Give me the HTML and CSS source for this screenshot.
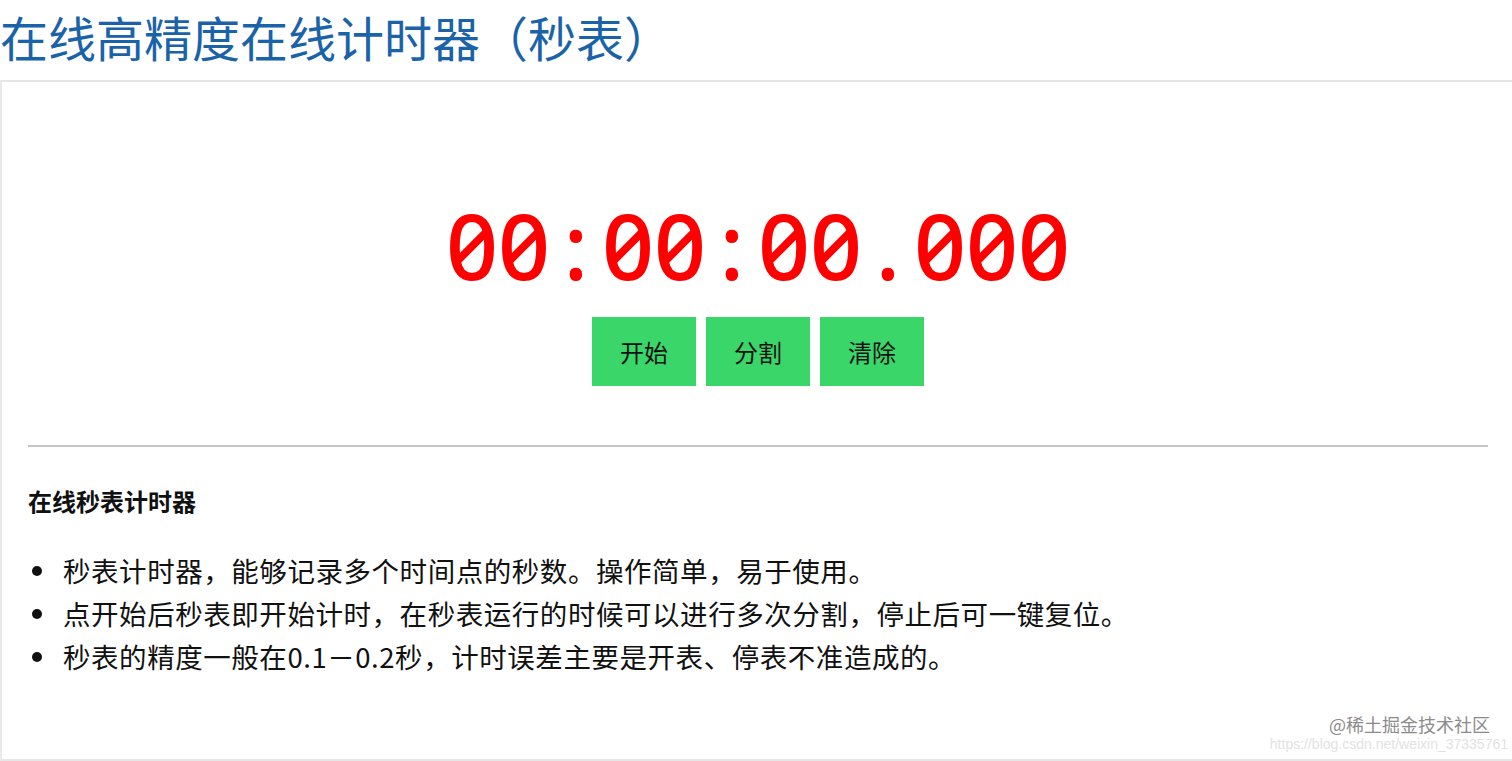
FILE: index.html
```html
<!DOCTYPE html>
<html lang="zh-CN">
<head>
<meta charset="utf-8">
<title>在线高精度在线计时器（秒表）</title>
<link rel="stylesheet" href="styles.css">
</head>
<body>
<h1 class="title">在线高精度在线计时器（秒表）</h1>
<div class="panel">
  <div class="timer" aria-label="00:00:00.000">
    <span class="ch">0</span><span class="ch">0</span><span class="ch">:</span><span class="ch">0</span><span class="ch">0</span><span class="ch">:</span><span class="ch">0</span><span class="ch">0</span><span class="ch">.</span><span class="ch">0</span><span class="ch">0</span><span class="ch">0</span>
  </div>
  <div class="buttons">
    <button class="btn">开始</button>
    <button class="btn">分割</button>
    <button class="btn">清除</button>
  </div>
  <hr class="rule">
  <h2 class="subtitle">在线秒表计时器</h2>
  <ul class="notes">
    <li>秒表计时器，能够记录多个时间点的秒数。操作简单，易于使用。</li>
    <li>点开始后秒表即开始计时，在秒表运行的时候可以进行多次分割，停止后可一键复位。</li>
    <li>秒表的精度一般在0.1－0.2秒，计时误差主要是开表、停表不准造成的。</li>
  </ul>
  <div class="watermark">
    <span class="wm-main">@稀土掘金技术社区</span>
    <span class="wm-url">https://blog.csdn.net/weixin_37335761</span>
  </div>
</div>
</body>
</html>
```

FILE: styles.css
```css
html, body {
  margin: 0;
  padding: 0;
  background: #ffffff;
}
body {
  font-family: "Noto Sans CJK SC", "Noto Sans", sans-serif;
  color: #111;
}
.title {
  margin: 0;
  height: 80px;
  line-height: 72px;
  font-size: 48px;
  font-weight: 400;
  color: #1b63a8;
  white-space: nowrap;
}
.panel {
  position: relative;
  box-sizing: border-box;
  height: 681px;
  border-top: 2px solid #e6e6e6;
  border-left: 2px solid #e9e9e9;
  border-bottom: 2px solid #e6e6e6;
  padding: 0 24px 0 26px;
}
.timer {
  margin-top: 113px;
  display: flex;
  justify-content: center;
  font-family: "Noto Sans", sans-serif;
  font-feature-settings: "zero" 1, "tnum" 1;
  font-weight: 500;
  font-size: 91px;
  line-height: 100px;
  color: #ff0000;
}
.ch {
  width: 52px;
  text-align: center;
}
.buttons {
  margin-top: 22px;
  display: flex;
  justify-content: center;
  gap: 10px;
}
.btn {
  width: 104px;
  height: 69px;
  border: none;
  background: #3ad66a;
  color: #111;
  font-family: "Noto Sans CJK SC", sans-serif;
  font-size: 24px;
  padding: 0;
}
.rule {
  margin: 59px 0 0;
  border: none;
  border-top: 2px solid #c6c6c6;
  height: 0;
}
.subtitle {
  margin: 39px 0 0;
  font-size: 24px;
  line-height: 30px;
  font-weight: 700;
  color: #111;
}
.notes {
  list-style: none;
  margin: 33px 0 0;
  padding: 0;
}
.notes li {
  display: flex;
  align-items: center;
  font-size: 27.5px;
  line-height: 43px;
  letter-spacing: 0.55px;
  color: #111;
}
.notes li::before {
  content: "";
  flex: none;
  width: 10px;
  height: 10px;
  border-radius: 50%;
  background: #111;
  margin: 0 21px 0 4px;
}
.watermark {
  position: absolute;
  right: 4px;
  bottom: 4px;
  width: 240px;
  height: 42px;
}
.wm-main {
  position: absolute;
  right: 18px;
  top: 0;
  font-size: 18px;
  line-height: 22px;
  color: #8c8c8c;
  white-space: nowrap;
}
.wm-url {
  position: absolute;
  right: 0;
  top: 22px;
  font-family: "Liberation Sans", sans-serif;
  font-size: 14px;
  line-height: 18px;
  color: #e2e2e2;
  white-space: nowrap;
}
```
